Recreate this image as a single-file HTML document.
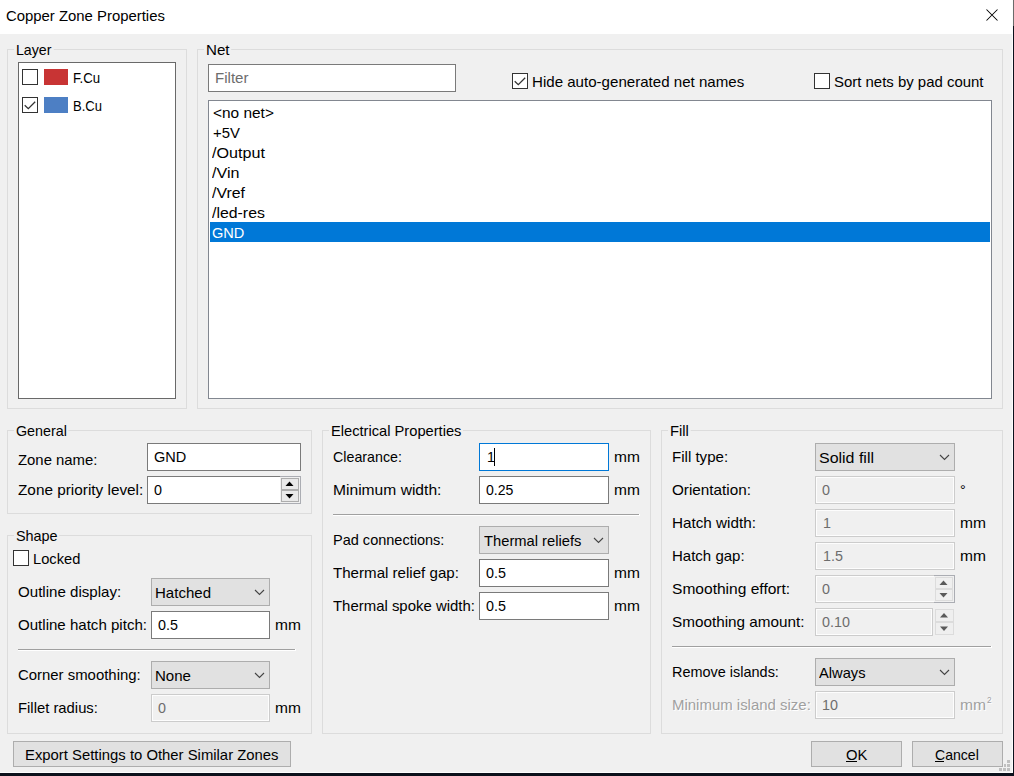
<!DOCTYPE html>
<html><head><meta charset="utf-8"><title>Copper Zone Properties</title>
<style>
html,body{margin:0;padding:0}
body{width:1014px;height:776px;overflow:hidden;position:relative;background:#f0f0f0;font-family:"Liberation Sans", sans-serif;font-size:15px;color:#000}
div,span,svg{position:absolute;box-sizing:border-box}
.t{white-space:pre;line-height:20px;height:20px;transform-origin:0 0}
.gl{background:#f0f0f0;padding:0 2px}
.dis{text-shadow:1px 1px 0 #fff}
u{text-decoration-thickness:1px;text-underline-offset:2px}
.tb{background:#fff}
.grp{border:1px solid #dcdcdc}
.lst{background:#fff;border:1px solid #828790}
.sel{background:#0078d7}
.inp{background:#fff;border:1px solid #7a7a7a}
.foc{border-color:#0078d7}
.din{background:#f0f0f0;border:1px solid #ccc;box-shadow:inset 0 0 0 1px #fdfdfd}
.cmb,.btn{background:#e1e1e1;border:1px solid #adadad}
.sep{background:#a0a0a0}
.chk{background:#fff;border:1px solid #333}
.spn{background:#f0f0f0;border:1px solid #abadb3;border-left:none}
.sbt{background:#e9e9e9;border:1px solid #adadad}
.sbd{background:#efefef;border:1px solid #dcdcdc}
</style></head><body>
<div class="tb" style="left:0px;top:0px;width:1013px;height:34px;"></div>
<div class="grp" style="left:7px;top:49px;width:180px;height:360px;"></div>
<div class="grp" style="left:197px;top:49px;width:806px;height:360px;"></div>
<div class="grp" style="left:7px;top:430px;width:305px;height:84px;"></div>
<div class="grp" style="left:7px;top:535px;width:305px;height:199px;"></div>
<div class="grp" style="left:322px;top:430px;width:329px;height:304px;"></div>
<div class="grp" style="left:661px;top:430px;width:342px;height:304px;"></div>
<div class="lst" style="left:18px;top:62px;width:158px;height:337px;border-color:#696969;"></div>
<div class="lst" style="left:208px;top:100px;width:784px;height:299px;"></div>
<div class="sel" style="left:210px;top:222px;width:780px;height:20px;"></div>
<div class="inp" style="left:208px;top:64px;width:248px;height:28px;"></div>
<div class="inp" style="left:147px;top:443px;width:154px;height:28px;"></div>
<div class="inp" style="left:151px;top:611px;width:119px;height:28px;"></div>
<div class="inp foc" style="left:479px;top:443px;width:130px;height:28px;"></div>
<div class="inp" style="left:479px;top:476px;width:130px;height:28px;"></div>
<div class="inp" style="left:479px;top:559px;width:130px;height:28px;"></div>
<div class="inp" style="left:479px;top:592px;width:130px;height:28px;"></div>
<div class="din" style="left:151px;top:694px;width:119px;height:28px;"></div>
<div class="din" style="left:815px;top:476px;width:140px;height:28px;"></div>
<div class="din" style="left:815px;top:509px;width:140px;height:28px;"></div>
<div class="din" style="left:815px;top:542px;width:140px;height:28px;"></div>
<div class="din" style="left:815px;top:575px;width:140px;height:28px;"></div>
<div class="din" style="left:815px;top:608px;width:118px;height:28px;"></div>
<div class="din" style="left:815px;top:691px;width:140px;height:28px;"></div>
<div class="cmb" style="left:151px;top:578px;width:119px;height:28px;"></div>
<div class="cmb" style="left:151px;top:661px;width:119px;height:28px;"></div>
<div class="cmb" style="left:479px;top:526px;width:130px;height:28px;"></div>
<div class="cmb" style="left:815px;top:443px;width:140px;height:28px;"></div>
<div class="cmb" style="left:815px;top:658px;width:140px;height:28px;"></div>
<div class="btn" style="left:13px;top:741px;width:278px;height:26px;"></div>
<div class="btn" style="left:811px;top:741px;width:91px;height:26px;"></div>
<div class="btn" style="left:912px;top:741px;width:91px;height:26px;"></div>
<div class="sw" style="left:18px;top:649px;width:278px;height:2px;background:#fff;"></div>
<div class="sep" style="left:18px;top:649px;width:277px;height:1px;"></div>
<div class="sw" style="left:333px;top:514px;width:307px;height:2px;background:#fff;"></div>
<div class="sep" style="left:333px;top:514px;width:306px;height:1px;"></div>
<div class="sw" style="left:672px;top:646px;width:320px;height:2px;background:#fff;"></div>
<div class="sep" style="left:672px;top:646px;width:319px;height:1px;"></div>
<div class="chk" style="left:22px;top:69px;width:16px;height:16px;"></div>
<div class="chk" style="left:22px;top:97px;width:16px;height:16px;"></div>
<div class="chk" style="left:512px;top:73px;width:16px;height:16px;"></div>
<div class="chk" style="left:814px;top:73px;width:16px;height:16px;"></div>
<div class="chk" style="left:13px;top:550px;width:16px;height:16px;"></div>
<div class="sw" style="left:44px;top:69px;width:24px;height:16px;background:#c83434;"></div>
<div class="sw" style="left:44px;top:97px;width:24px;height:16px;background:#4d7fc4;"></div>
<div class="sw" style="left:846px;top:761px;width:11px;height:1px;background:#000;"></div>
<div class="sw" style="left:935px;top:761px;width:9px;height:1px;background:#000;"></div>
<div class="sw" style="left:494px;top:448px;width:1px;height:18px;background:#000;"></div>
<div class="inp" style="left:147px;top:476px;width:154px;height:28px;"></div>
<div class="spn" style="left:280px;top:476px;width:21px;height:28px;"></div>
<div class="sbt" style="left:281px;top:478px;width:18px;height:12px;"></div>
<div class="sbt" style="left:281px;top:490px;width:18px;height:12px;"></div>
<div class="spn" style="left:934px;top:575px;width:21px;height:28px;border-color:#abadb3;"></div>
<div class="sbd" style="left:935px;top:577px;width:18px;height:12px;"></div>
<div class="sbd" style="left:935px;top:589px;width:18px;height:12px;"></div>
<div class="sbd" style="left:935px;top:609px;width:19px;height:13px;"></div>
<div class="sbd" style="left:935px;top:622px;width:19px;height:13px;"></div>
<div class="sw" style="left:1012px;top:0px;width:1px;height:776px;background:#fcfcfc;"></div>
<div class="sw" style="left:0px;top:772px;width:1014px;height:1px;background:#fcfcfc;"></div>
<div class="sw" style="left:1013px;top:0px;width:1px;height:26px;background:#6b6b6b;"></div>
<div class="sw" style="left:1013px;top:26px;width:1px;height:750px;background:#0b101b;"></div>
<div class="sw" style="left:0px;top:773px;width:1014px;height:3px;background:#0b101b;"></div>
<svg width="1014" height="776" viewBox="0 0 1014 776" style="left:0;top:0"><path d="M255.0 590.0 L259.5 594.5 L264.0 590.0" fill="none" stroke="#444" stroke-width="1.1"/><path d="M255.0 673.0 L259.5 677.5 L264.0 673.0" fill="none" stroke="#444" stroke-width="1.1"/><path d="M594.0 538.0 L598.5 542.5 L603.0 538.0" fill="none" stroke="#444" stroke-width="1.1"/><path d="M940.0 455.0 L944.5 459.5 L949.0 455.0" fill="none" stroke="#444" stroke-width="1.1"/><path d="M940.0 670.0 L944.5 674.5 L949.0 670.0" fill="none" stroke="#444" stroke-width="1.1"/><path d="M24.7 105.2 L28.3 108.7 L35.2 101.8" fill="none" stroke="#333" stroke-width="1.3"/><path d="M514.7 81.2 L518.3 84.7 L525.2 77.8" fill="none" stroke="#333" stroke-width="1.3"/><path d="M285.5 486.0 L289.5 481.5 L293.5 486.0 Z" fill="#000"/><path d="M285.5 494 L289.5 498.5 L293.5 494 Z" fill="#000"/><path d="M939.5 585.0 L943.5 580.5 L947.5 585.0 Z" fill="#5a5a5a"/><path d="M939.5 593 L943.5 597.5 L947.5 593 Z" fill="#5a5a5a"/><path d="M940 617.5 L944 613 L948 617.5 Z" fill="#5a5a5a"/><path d="M940 626.5 L944 631.0 L948 626.5 Z" fill="#5a5a5a"/><path d="M986.5 9.5 L997.5 20.5 M997.5 9.5 L986.5 20.5" stroke="#000" stroke-width="1.05" fill="none"/><rect x="1007" y="760" width="3" height="3" fill="#bfbfbf"/><rect x="1004" y="764" width="2" height="3" fill="#bfbfbf"/><rect x="1007" y="764" width="3" height="3" fill="#bfbfbf"/><rect x="999" y="768" width="3" height="3" fill="#bfbfbf"/><rect x="1003" y="768" width="3" height="3" fill="#bfbfbf"/><rect x="1007" y="768" width="3" height="3" fill="#bfbfbf"/></svg>
<span class="t" style="left:5.5px;top:6px;transform:scaleX(0.9925);">Copper Zone Properties</span>
<span class="t gl" style="left:13.8px;top:40px;transform:scaleX(0.9459);">Layer</span>
<span class="t gl" style="left:203.9px;top:40px;transform:scaleX(1.0067);">Net</span>
<span class="t gl" style="left:13.8px;top:421px;transform:scaleX(0.9555);">General</span>
<span class="t gl" style="left:13.8px;top:526px;transform:scaleX(0.9614);">Shape</span>
<span class="t gl" style="left:329.3px;top:421px;transform:scaleX(0.9783);">Electrical Properties</span>
<span class="t gl" style="left:667.8px;top:421px;transform:scaleX(0.9858);">Fill</span>
<span class="t" style="left:72.9px;top:68px;transform:scaleX(0.8819);">F.Cu</span>
<span class="t" style="left:72.9px;top:96px;transform:scaleX(0.8693);">B.Cu</span>
<span class="t" style="left:214.5px;top:68px;transform:scaleX(1.0047);color:#6d6d6d;">Filter</span>
<span class="t" style="left:532.2px;top:72px;transform:scaleX(1.0058);">Hide auto-generated net names</span>
<span class="t" style="left:833.9px;top:72px;transform:scaleX(0.9959);">Sort nets by pad count</span>
<span class="t" style="left:212.5px;top:103px;transform:scaleX(1.0281);">&lt;no net&gt;</span>
<span class="t" style="left:212.5px;top:123px;transform:scaleX(0.9923);">+5V</span>
<span class="t" style="left:211.5px;top:143px;transform:scaleX(1.0751);">/Output</span>
<span class="t" style="left:211.5px;top:163px;transform:scaleX(1.0712);">/Vin</span>
<span class="t" style="left:211.5px;top:183px;transform:scaleX(1.0570);">/Vref</span>
<span class="t" style="left:211.5px;top:203px;transform:scaleX(1.0573);">/led-res</span>
<span class="t" style="left:212.0px;top:223px;transform:scaleX(0.9717);color:#fff;">GND</span>
<span class="t" style="left:17.5px;top:450px;transform:scaleX(0.9919);">Zone name:</span>
<span class="t" style="left:153.6px;top:447px;transform:scaleX(0.9687);">GND</span>
<span class="t" style="left:17.5px;top:480px;transform:scaleX(1.0223);">Zone priority level:</span>
<span class="t" style="left:154.1px;top:480px;transform:scaleX(0.9550);">0</span>
<span class="t" style="left:32.8px;top:549px;transform:scaleX(0.9778);">Locked</span>
<span class="t" style="left:17.5px;top:582px;transform:scaleX(1.0062);">Outline display:</span>
<span class="t" style="left:155.4px;top:583px;transform:scaleX(1.0022);">Hatched</span>
<span class="t" style="left:17.5px;top:615px;transform:scaleX(1.0045);">Outline hatch pitch:</span>
<span class="t" style="left:157.9px;top:615px;transform:scaleX(0.9550);">0.5</span>
<span class="t" style="left:275.4px;top:615px;transform:scaleX(1.0360);">mm</span>
<span class="t" style="left:17.5px;top:665px;transform:scaleX(0.9943);">Corner smoothing:</span>
<span class="t" style="left:155.4px;top:666px;transform:scaleX(1.0039);">None</span>
<span class="t" style="left:17.5px;top:698px;transform:scaleX(0.9881);">Fillet radius:</span>
<span class="t" style="left:157.9px;top:698px;transform:scaleX(0.9550);color:#6d6d6d;">0</span>
<span class="t" style="left:275.4px;top:698px;transform:scaleX(1.0360);">mm</span>
<span class="t" style="left:25.3px;top:745px;transform:scaleX(0.9905);">Export Settings to Other Similar Zones</span>
<span class="t" style="left:332.5px;top:447px;transform:scaleX(0.9497);">Clearance:</span>
<span class="t" style="left:486.7px;top:447px;transform:scaleX(0.9550);">1</span>
<span class="t" style="left:613.8px;top:447px;transform:scaleX(1.0360);">mm</span>
<span class="t" style="left:332.5px;top:480px;transform:scaleX(1.0404);">Minimum width:</span>
<span class="t" style="left:486.0px;top:480px;transform:scaleX(0.9383);">0.25</span>
<span class="t" style="left:613.8px;top:480px;transform:scaleX(1.0360);">mm</span>
<span class="t" style="left:332.5px;top:530px;transform:scaleX(0.9680);">Pad connections:</span>
<span class="t" style="left:483.5px;top:531px;transform:scaleX(0.9818);">Thermal reliefs</span>
<span class="t" style="left:332.5px;top:563px;transform:scaleX(1.0067);">Thermal relief gap:</span>
<span class="t" style="left:486.0px;top:563px;transform:scaleX(0.9550);">0.5</span>
<span class="t" style="left:613.8px;top:563px;transform:scaleX(1.0360);">mm</span>
<span class="t" style="left:332.5px;top:596px;transform:scaleX(0.9954);">Thermal spoke width:</span>
<span class="t" style="left:486.0px;top:596px;transform:scaleX(0.9550);">0.5</span>
<span class="t" style="left:613.8px;top:596px;transform:scaleX(1.0360);">mm</span>
<span class="t" style="left:671.5px;top:447px;transform:scaleX(1.0043);">Fill type:</span>
<span class="t" style="left:818.9px;top:448px;transform:scaleX(1.0641);">Solid fill</span>
<span class="t" style="left:671.5px;top:480px;transform:scaleX(1.0174);">Orientation:</span>
<span class="t" style="left:822.1px;top:480px;transform:scaleX(0.9550);color:#6d6d6d;">0</span>
<span class="t" style="left:959.5px;top:480px;transform:scaleX(0.9550);">°</span>
<span class="t" style="left:671.5px;top:513px;transform:scaleX(1.0164);">Hatch width:</span>
<span class="t" style="left:823.0px;top:513px;transform:scaleX(0.9550);color:#6d6d6d;">1</span>
<span class="t" style="left:960.0px;top:513px;transform:scaleX(1.0400);">mm</span>
<span class="t" style="left:671.5px;top:546px;transform:scaleX(1.0007);">Hatch gap:</span>
<span class="t" style="left:823.0px;top:546px;transform:scaleX(0.9550);color:#6d6d6d;">1.5</span>
<span class="t" style="left:960.0px;top:546px;transform:scaleX(1.0400);">mm</span>
<span class="t" style="left:671.5px;top:579px;transform:scaleX(1.0371);">Smoothing effort:</span>
<span class="t" style="left:822.1px;top:579px;transform:scaleX(0.9550);color:#6d6d6d;">0</span>
<span class="t" style="left:671.5px;top:612px;transform:scaleX(1.0186);">Smoothing amount:</span>
<span class="t" style="left:821.7px;top:612px;transform:scaleX(0.9550);color:#6d6d6d;">0.10</span>
<span class="t" style="left:671.5px;top:662px;transform:scaleX(0.9640);">Remove islands:</span>
<span class="t" style="left:818.9px;top:663px;transform:scaleX(0.9786);">Always</span>
<span class="t dis" style="left:671.5px;top:695px;transform:scaleX(0.9970);color:#a0a0a0;">Minimum island size:</span>
<span class="t" style="left:822.2px;top:695px;transform:scaleX(0.9550);color:#6d6d6d;">10</span>
<span class="t dis" style="left:960.0px;top:695px;transform:scaleX(1.0400);color:#a0a0a0;">mm</span>
<span class="t dis" style="left:987.1px;top:689.7px;transform:scaleX(0.9550);color:#a0a0a0;font-size:8.5px;">2</span>
<span class="t" style="left:845.5px;top:745px;transform:scaleX(0.9867);">OK</span>
<span class="t" style="left:935.1px;top:745px;transform:scaleX(0.9378);">Cancel</span>
</body></html>
